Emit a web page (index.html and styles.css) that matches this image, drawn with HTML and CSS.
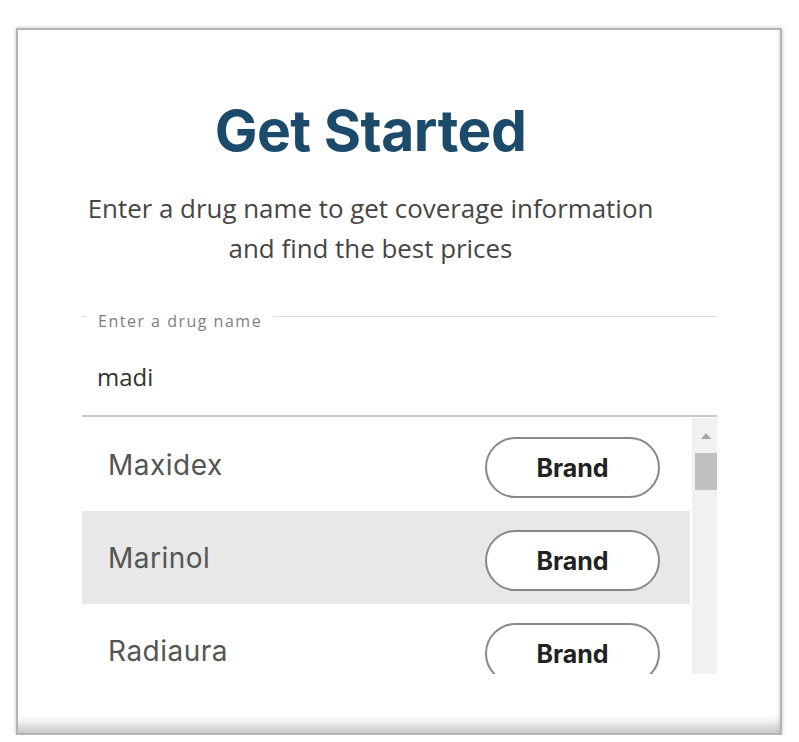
FILE: index.html
```html
<!DOCTYPE html>
<html lang="en">
<head>
<meta charset="utf-8">
<title>Get Started</title>
<link rel="stylesheet" href="styles.css">
</head>
<body>
<div class="card">
  <div class="intro">
    <h1 class="title">Get Started</h1>
    <p class="subtitle">Enter a drug name to get coverage information<br>and find the best prices</p>
  </div>
  <fieldset class="field">
    <legend class="field-label">Enter a drug name</legend>
    <div class="field-value">madi</div>
  </fieldset>
  <div class="results">
    <ul class="list">
      <li class="item"><span class="name">Maxidex</span><span class="pill">Brand</span></li>
      <li class="item active"><span class="name">Marinol</span><span class="pill">Brand</span></li>
      <li class="item"><span class="name">Radiaura</span><span class="pill">Brand</span></li>
    </ul>
    <div class="scrollbar"><span class="arrow"></span><span class="thumb"></span></div>
  </div>
</div>
</body>
</html>
```
FILE: styles.css
```css
* { box-sizing: border-box; }
body {
  margin: 0;
  background: #ffffff;
  padding: 28px 0 0 16px;
}
.card {
  width: 766px;
  height: 707px;
  border: 2px solid #b4b4b4;
  background: #ffffff;
  box-shadow: 0 0 4px rgba(0,0,0,0.25), inset 0 -16px 12px -8px rgba(0,0,0,0.22), inset -3px 0 4px -2px rgba(0,0,0,0.12);
  padding: 66px 63px 0 64px;
  overflow: hidden;
}
.intro {
  margin-right: 58px;
  text-align: center;
}
.title {
  margin: 0;
  font-family: Inter, "Liberation Sans", sans-serif;
  font-weight: 700;
  font-size: 57px;
  line-height: 70px;
  letter-spacing: -0.5px;
  color: #1b4a6b;
}
.subtitle {
  margin: 22px 0 0;
  font-family: "Open Sans", "Liberation Sans", sans-serif;
  font-size: 25.9px;
  line-height: 40px;
  color: #464646;
}
.field {
  margin: 33px 0 0;
  padding: 0 0 22px 5px;
  min-width: 0;
  border: none;
  border-top: 1px solid #dedede;
  border-bottom: 2px solid #c9c9c9;
}
.field-label {
  padding: 10px 11px 0;
  font-family: "Open Sans", "Liberation Sans", sans-serif;
  font-size: 16px;
  line-height: 20px;
  letter-spacing: 1.5px;
  color: #7e7e7e;
}
.field-value {
  margin: 30px 0 0 10px;
  font-family: "Open Sans", "Liberation Sans", sans-serif;
  font-size: 24px;
  line-height: 32px;
  color: #333333;
}
.results {
  margin-top: 1px;
  height: 256px;
  display: flex;
  overflow: hidden;
}
.list {
  flex: 1;
  margin: 0;
  padding: 0;
  list-style: none;
}
.item {
  height: 93px;
  display: flex;
  align-items: center;
  justify-content: space-between;
  padding: 0 30px 0 26px;
}
.item.active { background: #e8e8e8; }
.name {
  font-family: Inter, "Liberation Sans", sans-serif;
  font-size: 28px;
  letter-spacing: 0.5px;
  color: #555555;
}
.pill {
  width: 175px;
  height: 61px;
  margin-top: 6px;
  border: 2px solid #888888;
  border-radius: 31px;
  background: #ffffff;
  display: flex;
  align-items: center;
  justify-content: center;
  font-family: Inter, "Liberation Sans", sans-serif;
  font-weight: 700;
  font-size: 25px;
  color: #222222;
}
.scrollbar {
  width: 25px;
  margin-left: 2px;
  background: #f1f1f1;
  display: flex;
  flex-direction: column;
  align-items: center;
  padding: 15px 0 0 3px;
}
.arrow {
  width: 0;
  height: 0;
  border-left: 5px solid transparent;
  border-right: 5px solid transparent;
  border-bottom: 6px solid #a6a6a6;
}
.thumb {
  width: 22px;
  height: 37px;
  margin-top: 14px;
  background: #c1c1c1;
}
```
